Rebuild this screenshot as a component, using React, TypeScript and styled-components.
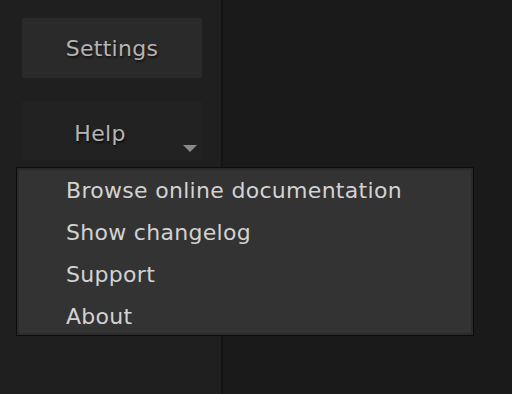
import React from 'react'
import styled, { createGlobalStyle } from 'styled-components'

const Global = createGlobalStyle`
  html, body {
    margin: 0;
    padding: 0;
    background: #1b1b1b;
  }
  body {
    font-family: 'DejaVu Sans', Verdana, sans-serif;
  }
`

const Page = styled.div`
  position: relative;
  display: flex;
  width: 512px;
  height: 394px;
  overflow: hidden;
`

const Sidebar = styled.div`
  width: 223px;
  flex-shrink: 0;
  background: #1f1f1f;
  border-right: 2px solid #141414;
  padding: 18px 0 0 22px;
  box-sizing: border-box;
  display: flex;
  flex-direction: column;
  gap: 24px;
`

const Main = styled.div`
  flex: 1;
  background: #1a1a1a;
`

const NavButton = styled.div<{ $active?: boolean }>`
  position: relative;
  width: 180px;
  height: ${(p) => (p.$active ? 60 : 58)}px;
  background: ${(p) => (p.$active ? '#2a2a2a' : '#222222')};
  display: flex;
  align-items: center;
  justify-content: center;
  color: #b4b4b4;
  font-size: 22px;
  letter-spacing: 0.3px;
  text-shadow: 1px 2px 2px rgba(0, 0, 0, 0.6);
`

const HelpLabel = styled.span`
  margin-left: -24px;
  margin-top: 4px;
`

const Caret = styled.span`
  position: absolute;
  right: 5px;
  bottom: 8px;
  width: 0;
  height: 0;
  border-left: 7px solid transparent;
  border-right: 7px solid transparent;
  border-top: 7px solid #8a8a8a;
`

const Menu = styled.ul`
  position: absolute;
  left: 16px;
  top: 167px;
  width: 458px;
  height: 169px;
  box-sizing: border-box;
  margin: 0;
  padding: 2px 0 4px 49px;
  list-style: none;
  background: #333333;
  border: 1px solid #0c0c0c;
  box-shadow: inset 0 0 0 2px #2a2a2a;
  display: flex;
  flex-direction: column;
  justify-content: space-around;
`

const MenuItem = styled.li`
  color: #d2d2d2;
  font-size: 22px;
  letter-spacing: 0.3px;
  line-height: 42px;
`

const items = ['Browse online documentation', 'Show changelog', 'Support', 'About']

export default function App() {
  return (
    <>
      <Global />
      <Page>
        <Sidebar>
          <NavButton $active>Settings</NavButton>
          <NavButton>
            <HelpLabel>Help</HelpLabel>
            <Caret />
          </NavButton>
        </Sidebar>
        <Main />
        <Menu>
          {items.map((it) => (
            <MenuItem key={it}>{it}</MenuItem>
          ))}
        </Menu>
      </Page>
    </>
  )
}
